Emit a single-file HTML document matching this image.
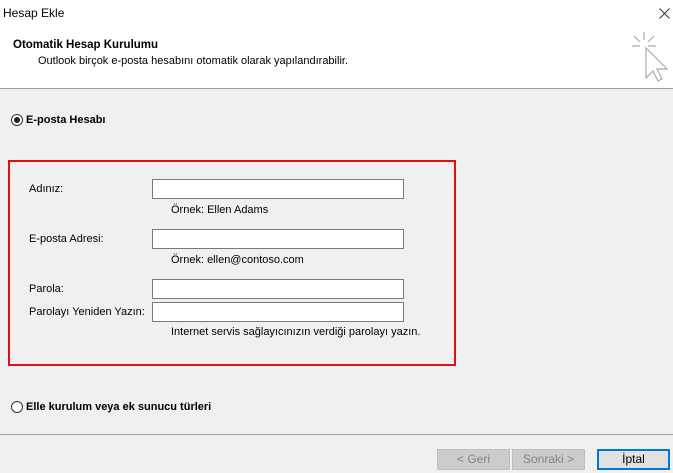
<!DOCTYPE html><html><head><style>
body{margin:0;width:673px;height:473px;background:#f0f0f0;font-family:"Liberation Sans",sans-serif;font-size:11px;color:#000;position:relative;overflow:hidden}
.a{position:absolute;white-space:nowrap}
.in{position:absolute;left:152px;width:250px;height:18px;background:#fff;border:1px solid #7a7a7a}
.btn{position:absolute;top:449px;height:19px;width:71px;border:1px solid #bfbfbf;background:#cccccc;color:#838383;text-align:center;line-height:19px;font-size:12px}
.radio{position:absolute;width:10px;height:10px;border:1px solid #333;border-radius:50%;background:#fff}
</style></head><body>
<div class="a" style="left:0;top:0;width:673px;height:88px;background:#fff"></div>
<div class="a" style="left:0;top:88px;width:673px;height:1px;background:#a0a0a0"></div>
<div class="a" style="left:3px;top:6px;font-size:12px">Hesap Ekle</div>
<svg class="a" style="left:659px;top:8px" width="11" height="11" viewBox="0 0 11 11" stroke="#333" stroke-width="1"><path d="M0.5 0.5l10 10M10.5 0.5l-10 10"/></svg>
<div class="a" style="left:13px;top:39px;font-weight:bold;font-size:11.5px">Otomatik Hesap Kurulumu</div>
<div class="a" style="left:38px;top:55px">Outlook birçok e-posta hesabını otomatik olarak yapılandırabilir.</div>
<svg class="a" style="left:630px;top:30px" width="40" height="54" viewBox="0 0 40 54" fill="none" stroke="#aaa" stroke-width="1.2"><path d="M14 2v8M4 6l6 6M2 16h8M24 6l-6 6M26 16h-8"/><path d="M16 18v30l7-7 5 10 4-2-5-10h10z" fill="#fff"/></svg>
<div class="radio" style="left:11px;top:114px"></div><div class="a" style="left:14px;top:117px;width:6px;height:6px;border-radius:50%;background:#222"></div>
<div class="a" style="left:26px;top:114px;font-weight:bold">E-posta Hesabı</div>
<div class="a" style="left:8px;top:160px;width:444px;height:202px;border:2px solid #e01010"></div>
<div class="a" style="left:29px;top:183px">Adınız:</div>
<div class="in" style="top:179px"></div>
<div class="a" style="left:171px;top:204px">Örnek: Ellen Adams</div>
<div class="a" style="left:29px;top:233px">E-posta Adresi:</div>
<div class="in" style="top:229px"></div>
<div class="a" style="left:171px;top:254px">Örnek: ellen@contoso.com</div>
<div class="a" style="left:29px;top:283px">Parola:</div>
<div class="in" style="top:279px"></div>
<div class="a" style="left:29px;top:306px">Parolayı Yeniden Yazın:</div>
<div class="in" style="top:302px"></div>
<div class="a" style="left:171px;top:326px">Internet servis sağlayıcınızın verdiği parolayı yazın.</div>
<div class="radio" style="left:11px;top:401px"></div>
<div class="a" style="left:26px;top:401px;font-weight:bold">Elle kurulum veya ek sunucu türleri</div>
<div class="a" style="left:0;top:434px;width:673px;height:1px;background:#a0a0a0"></div>
<div class="btn" style="left:437px">&lt; Geri</div>
<div class="btn" style="left:512px">Sonraki &gt;</div>
<div class="btn" style="left:597px;width:69px;height:17px;line-height:17px;border:2px solid #0078d7;background:#e1e1e1;color:#000">İptal</div>
</body></html>
